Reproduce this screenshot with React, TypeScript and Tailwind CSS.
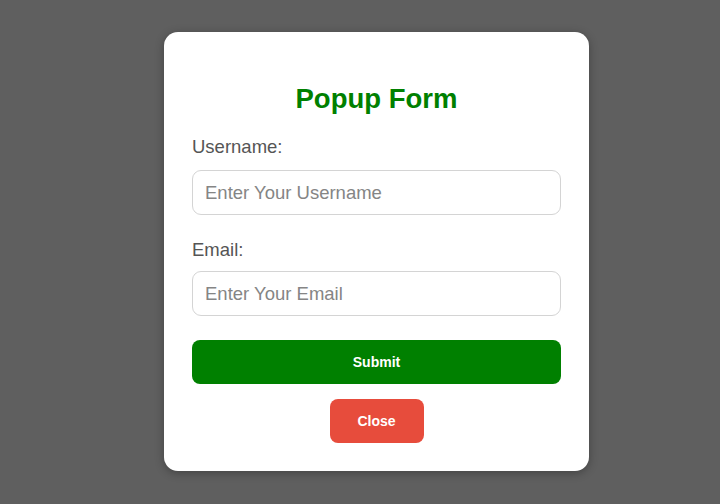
export default function App() {
  return (
    <div
      className="w-[720px] h-[504px] bg-[#5f5f5f] flex items-start pl-[164px] pt-[32px]"
      style={{ fontFamily: '"Liberation Sans", Arial, sans-serif' }}
    >
      <div className="w-[425px] h-[439px] bg-white rounded-[14px] shadow-[0_2px_10px_rgba(0,0,0,0.3)] px-[28px] pt-[52px] flex flex-col">
        <h2 className="text-[27.5px] leading-[30px] font-bold text-[#008000] text-center">Popup Form</h2>

        <label className="mt-[23px] text-[18.5px] leading-[20px] text-[#555]">Username:</label>
        <input
          type="text"
          placeholder="Enter Your Username"
          className="mt-[13px] h-[45px] w-full rounded-[9px] border border-[#d4d4d4] px-[12px] text-[18.5px] text-[#333] placeholder:text-[#858585] outline-none"
        />

        <label className="mt-[25px] text-[18.5px] leading-[20px] text-[#555]">Email:</label>
        <input
          type="email"
          placeholder="Enter Your Email"
          className="mt-[11px] h-[45px] w-full rounded-[9px] border border-[#d4d4d4] px-[12px] text-[18.5px] text-[#333] placeholder:text-[#858585] outline-none"
        />

        <button className="mt-[24px] h-[44px] w-full rounded-[8px] bg-[#008000] text-white text-[14px] font-bold">
          Submit
        </button>

        <div className="mt-[15px] flex justify-center">
          <button className="w-[94px] h-[44px] rounded-[8px] bg-[#e74c3c] text-white text-[14px] font-bold">
            Close
          </button>
        </div>
      </div>
    </div>
  );
}
